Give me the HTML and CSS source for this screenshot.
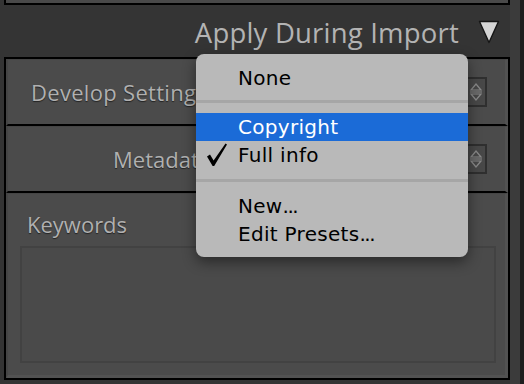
FILE: index.html
```html
<!DOCTYPE html>
<html>
<head>
<meta charset="utf-8">
<link rel="stylesheet" href="styles.css">
</head>
<body>
<div class="screen">
  <div class="prev-panel"></div>
  <div class="header">
    <span class="header-title">Apply During Import</span>
    <svg class="header-arrow" width="22" height="24" viewBox="0 0 22 24"><path d="M1.5 1.5 H20.5 L11 22.5 Z" fill="#d4d4d4" stroke="#151515" stroke-width="1.4" stroke-linejoin="round"/></svg>
  </div>
  <div class="panel">
    <div class="row">
      <span class="label label-dev">Develop Settings</span>
      <div class="popup-btn"><span class="stepper"><svg width="14" height="22" viewBox="0 0 14 22"><path d="M2 9 L7 3 L12 9 Z M2 13 L7 19 L12 13 Z" fill="none" stroke="#8a8a8a" stroke-width="1.2"/><path d="M1 11 H13" stroke="#8a8a8a" stroke-width="1"/></svg></span></div>
    </div>
    <div class="row">
      <span class="label label-right">Metadata</span>
      <div class="popup-btn"><span class="stepper"><svg width="14" height="22" viewBox="0 0 14 22"><path d="M2 9 L7 3 L12 9 Z M2 13 L7 19 L12 13 Z" fill="none" stroke="#8a8a8a" stroke-width="1.2"/><path d="M1 11 H13" stroke="#8a8a8a" stroke-width="1"/></svg></span></div>
    </div>
    <div class="row row-keywords">
      <span class="label">Keywords</span>
      <div class="keywords-box"></div>
    </div>
  </div>
  <div class="side-strip"></div>

  <div class="menu">
    <div class="item">None</div>
    <div class="sep"></div>
    <div class="item selected">Copyright</div>
    <div class="item"><svg class="check" width="22" height="24" viewBox="0 0 22 24"><path d="M1 13.5 L4 11.5 L7.6 17.5 L19.5 0.5 L21 1.6 L8.2 23 L6.6 23 Z" fill="#000"/></svg>Full info</div>
    <div class="sep sep2"></div>
    <div class="item">New<span class="dots">...</span></div>
    <div class="item">Edit Presets<span class="dots">...</span></div>
  </div>
</div>
</body>
</html>
```

FILE: styles.css
```css
html, body {
  margin: 0;
  padding: 0;
  background: #343434;
}
.screen {
  position: relative;
  width: 524px;
  height: 384px;
  overflow: hidden;
  font-family: "Open Sans", "DejaVu Sans", sans-serif;
}
.prev-panel {
  margin-left: 4px;
  width: 502px;
  height: 3px;
  background: #494949;
  border: 2px solid #000;
  border-top: none;
}
.header {
  height: 52px;
  width: 510px;
  display: flex;
  align-items: center;
  justify-content: flex-end;
  box-sizing: border-box;
  padding-right: 10px;
  padding-top: 2px;
}
.header-title {
  font-size: 27.5px;
  color: #b3b3b3;
  letter-spacing: 0.2px;
}
.header-arrow {
  display: block;
  flex-shrink: 0;
  width: 22px;
  height: 24px;
  margin-left: 19px;
  margin-top: 0;
}
.panel {
  margin-left: 4px;
  width: 502px;
  border: 2px solid #000;
  background: #4b4b4b;
}
.row {
  height: 64px;
  display: flex;
  align-items: center;
  border-bottom: 2px solid #000;
  border-top: 1px solid #454545;
  border-left: 2px solid #454545;
  border-right: 3px solid #525252;
  background: #4b4b4b;
}
.label {
  font-size: 22px;
  color: #b0b0b0;
  text-shadow: 0 1px 1px rgba(0,0,0,0.55);
  margin-left: 23px;
  width: 180px;
  white-space: nowrap;
}
.label-dev {
  letter-spacing: 0.3px;
}
.label-right {
  text-align: right;
}
.popup-btn {
  margin-left: auto;
  margin-right: 18px;
  width: 250px;
  height: 30px;
  box-sizing: border-box;
  border: 2px solid #2f2f2f;
  background: #484848;
  display: flex;
  align-items: center;
  justify-content: flex-end;
}
.stepper {
  display: flex;
  padding-right: 2px;
}
.row-keywords {
  height: 181px;
  border-bottom: 3px solid #525252;
  flex-direction: column;
  align-items: stretch;
}
.row-keywords .label {
  margin-left: 19px;
  margin-top: 15px;
  height: 30px;
}
.keywords-box {
  margin: 7px 9px 0 12px;
  height: 113px;
  border: 2px solid #424242;
  background: #4a4a4a;
}
.side-strip {
  position: absolute;
  left: 510px;
  top: 0;
  width: 10px;
  height: 384px;
  background: #3b3b3b;
  border-right: 4px solid #1e1e1e;
}
.menu {
  position: absolute;
  left: 196px;
  top: 54px;
  width: 272px;
  height: 203px;
  box-sizing: border-box;
  padding-top: 10px;
  background: #b9b9b9;
  border-radius: 8px;
  box-shadow: 0 5px 14px rgba(0,0,0,0.45);
  font-family: "DejaVu Sans", sans-serif;
}
.item {
  position: relative;
  height: 28px;
  line-height: 28px;
  padding-left: 42px;
  font-size: 20px;
  letter-spacing: 0.3px;
  color: #000;
}
.item.selected {
  background: #1b6bd7;
  color: #fff;
}
.dots {
  letter-spacing: -1.5px;
}
.check {
  position: absolute;
  left: 10px;
  top: 2px;
}
.sep {
  height: 3px;
  background: #a6a6a6;
  margin: 8px 0 10px;
}
.sep2 {
  margin: 10px 0 10px;
}
```
